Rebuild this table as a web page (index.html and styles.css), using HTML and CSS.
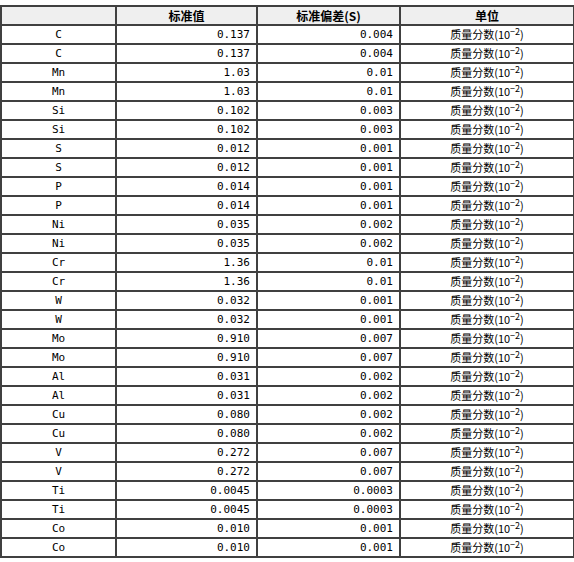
FILE: index.html
```html
<!DOCTYPE html>
<html>
<head>
<meta charset="utf-8">
<link rel="stylesheet" href="styles.css">
</head>
<body>
<table class="data">
<colgroup>
<col class="c1"><col class="c2"><col class="c3"><col class="c4">
</colgroup>
<thead>
<tr><th></th><th>标准值</th><th>标准偏差(S)</th><th>单位</th></tr>
</thead>
<tbody>
<tr><td class="el">C</td><td class="num">0.137</td><td class="num">0.004</td><td class="unit">质量分数(10<sup>−2</sup>)</td></tr>
<tr><td class="el">C</td><td class="num">0.137</td><td class="num">0.004</td><td class="unit">质量分数(10<sup>−2</sup>)</td></tr>
<tr><td class="el">Mn</td><td class="num">1.03</td><td class="num">0.01</td><td class="unit">质量分数(10<sup>−2</sup>)</td></tr>
<tr><td class="el">Mn</td><td class="num">1.03</td><td class="num">0.01</td><td class="unit">质量分数(10<sup>−2</sup>)</td></tr>
<tr><td class="el">Si</td><td class="num">0.102</td><td class="num">0.003</td><td class="unit">质量分数(10<sup>−2</sup>)</td></tr>
<tr><td class="el">Si</td><td class="num">0.102</td><td class="num">0.003</td><td class="unit">质量分数(10<sup>−2</sup>)</td></tr>
<tr><td class="el">S</td><td class="num">0.012</td><td class="num">0.001</td><td class="unit">质量分数(10<sup>−2</sup>)</td></tr>
<tr><td class="el">S</td><td class="num">0.012</td><td class="num">0.001</td><td class="unit">质量分数(10<sup>−2</sup>)</td></tr>
<tr><td class="el">P</td><td class="num">0.014</td><td class="num">0.001</td><td class="unit">质量分数(10<sup>−2</sup>)</td></tr>
<tr><td class="el">P</td><td class="num">0.014</td><td class="num">0.001</td><td class="unit">质量分数(10<sup>−2</sup>)</td></tr>
<tr><td class="el">Ni</td><td class="num">0.035</td><td class="num">0.002</td><td class="unit">质量分数(10<sup>−2</sup>)</td></tr>
<tr><td class="el">Ni</td><td class="num">0.035</td><td class="num">0.002</td><td class="unit">质量分数(10<sup>−2</sup>)</td></tr>
<tr><td class="el">Cr</td><td class="num">1.36</td><td class="num">0.01</td><td class="unit">质量分数(10<sup>−2</sup>)</td></tr>
<tr><td class="el">Cr</td><td class="num">1.36</td><td class="num">0.01</td><td class="unit">质量分数(10<sup>−2</sup>)</td></tr>
<tr><td class="el">W</td><td class="num">0.032</td><td class="num">0.001</td><td class="unit">质量分数(10<sup>−2</sup>)</td></tr>
<tr><td class="el">W</td><td class="num">0.032</td><td class="num">0.001</td><td class="unit">质量分数(10<sup>−2</sup>)</td></tr>
<tr><td class="el">Mo</td><td class="num">0.910</td><td class="num">0.007</td><td class="unit">质量分数(10<sup>−2</sup>)</td></tr>
<tr><td class="el">Mo</td><td class="num">0.910</td><td class="num">0.007</td><td class="unit">质量分数(10<sup>−2</sup>)</td></tr>
<tr><td class="el">Al</td><td class="num">0.031</td><td class="num">0.002</td><td class="unit">质量分数(10<sup>−2</sup>)</td></tr>
<tr><td class="el">Al</td><td class="num">0.031</td><td class="num">0.002</td><td class="unit">质量分数(10<sup>−2</sup>)</td></tr>
<tr><td class="el">Cu</td><td class="num">0.080</td><td class="num">0.002</td><td class="unit">质量分数(10<sup>−2</sup>)</td></tr>
<tr><td class="el">Cu</td><td class="num">0.080</td><td class="num">0.002</td><td class="unit">质量分数(10<sup>−2</sup>)</td></tr>
<tr><td class="el">V</td><td class="num">0.272</td><td class="num">0.007</td><td class="unit">质量分数(10<sup>−2</sup>)</td></tr>
<tr><td class="el">V</td><td class="num">0.272</td><td class="num">0.007</td><td class="unit">质量分数(10<sup>−2</sup>)</td></tr>
<tr><td class="el">Ti</td><td class="num">0.0045</td><td class="num">0.0003</td><td class="unit">质量分数(10<sup>−2</sup>)</td></tr>
<tr><td class="el">Ti</td><td class="num">0.0045</td><td class="num">0.0003</td><td class="unit">质量分数(10<sup>−2</sup>)</td></tr>
<tr><td class="el">Co</td><td class="num">0.010</td><td class="num">0.001</td><td class="unit">质量分数(10<sup>−2</sup>)</td></tr>
<tr><td class="el">Co</td><td class="num">0.010</td><td class="num">0.001</td><td class="unit">质量分数(10<sup>−2</sup>)</td></tr>
</tbody>
</table>
</body>
</html>
```

FILE: styles.css
```css
html, body {
  margin: 0;
  padding: 0;
  background: #ffffff;
}

.data {
  margin-top: 5px;
  border-collapse: collapse;
  table-layout: fixed;
  width: 573px;
  font-family: "DejaVu Sans Mono", "Noto Sans CJK SC", monospace;
  font-size: 11px;
  color: #000;
}

.c1 { width: 115px; }
.c2 { width: 141px; }
.c3 { width: 143px; }
.c4 { width: 174px; }

.data th,
.data td {
  border: 2px solid #404040;
  height: 17px;
  padding: 0 5px;
  line-height: 17px;
  white-space: nowrap;
  overflow: hidden;
}

.data th {
  background: #efefef;
  font-family: "Noto Sans CJK SC", sans-serif;
  font-weight: bold;
  font-size: 12px;
  text-align: center;
}

.data .el { text-align: center; }
.data .num { text-align: right; padding-right: 6px; }

.data .unit {
  text-align: center;
  font-family: "Noto Sans CJK SC", sans-serif;
  font-size: 11px;
  line-height: 17px;
  vertical-align: bottom;
}

.data .unit sup {
  font-size: 9px;
  line-height: 0;
  vertical-align: 4px;
}
```
